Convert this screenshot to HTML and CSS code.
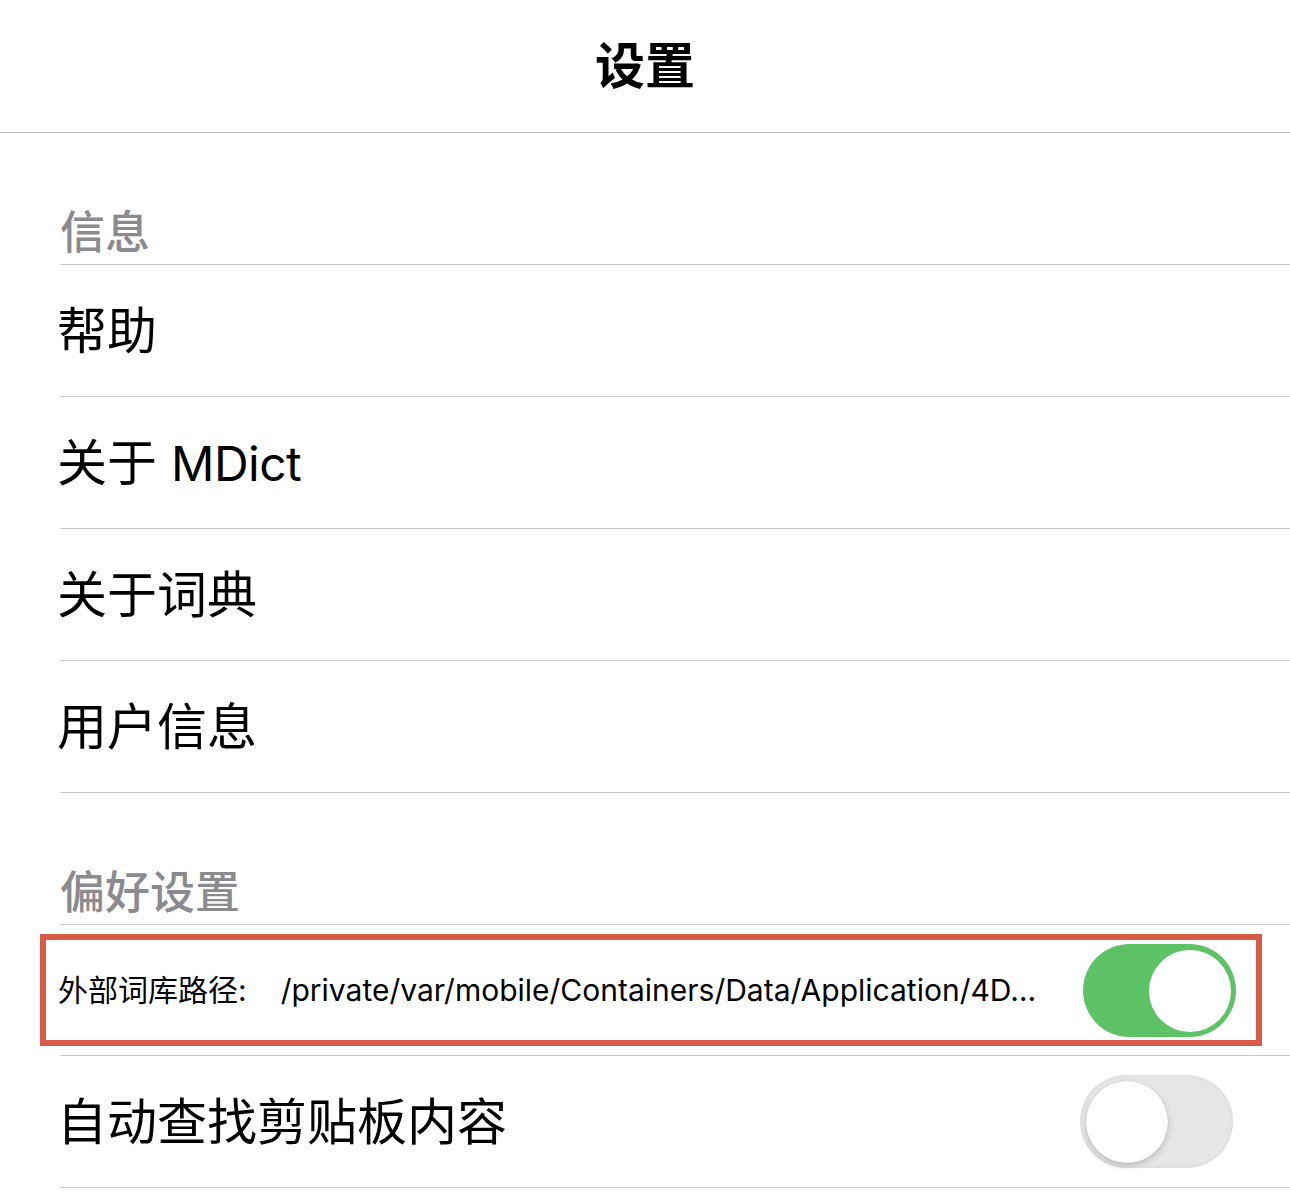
FILE: index.html
```html
<!DOCTYPE html>
<html lang="zh-CN">
<head>
<meta charset="utf-8">
<title>设置</title>
<link rel="stylesheet" href="styles.css">
</head>
<body>
<header class="nav">
  <h1 class="nav-title">设置</h1>
</header>
<main class="table">
  <section class="group">
    <div class="group-title">信息</div>
    <ul class="rows">
      <li class="row"><span class="row-label">帮助</span></li>
      <li class="row"><span class="row-label">关于 <span class="latin">MDict</span></span></li>
      <li class="row"><span class="row-label">关于词典</span></li>
      <li class="row"><span class="row-label">用户信息</span></li>
    </ul>
  </section>
  <section class="group">
    <div class="group-title">偏好设置</div>
    <ul class="rows">
      <li class="row row-path">
        <span class="path-label">外部词库路径:</span>
        <span class="path-value">/private/var/mobile/Containers/Data/Application/4D…</span>
        <span class="switch switch-on"><span class="knob"></span></span>
        <span class="highlight"></span>
      </li>
      <li class="row">
        <span class="row-label">自动查找剪贴板内容</span>
        <span class="switch switch-off"><span class="knob"></span></span>
      </li>
    </ul>
  </section>
</main>
</body>
</html>
```
FILE: styles.css
```css
* { box-sizing: border-box; }
html, body { margin: 0; padding: 0; background: #ffffff; }
body {
  font-family: "Inter", "Noto Sans CJK SC", sans-serif;
  color: #000;
  width: 1290px;
  height: 1192px;
  overflow: hidden;
}
.nav {
  height: 133px;
  border-bottom: 1px solid #b3b3b3;
  display: flex;
  align-items: center;
  justify-content: center;
}
.nav-title {
  margin: 0;
  font-size: 50px;
  font-weight: 700;
  line-height: 1;
}
.group-title {
  margin-left: 60px;
  height: 132px;
  border-bottom: 1px solid #c8c7cc;
  display: flex;
  align-items: flex-end;
  padding-bottom: 9px;
  font-size: 45px;
  font-weight: 500;
  line-height: 1;
  color: #8a8a8f;
}
.rows { list-style: none; margin: 0; padding: 0; }
.row {
  position: relative;
  margin-left: 60px;
  height: 132px;
  border-bottom: 1px solid #c8c7cc;
  display: flex;
  align-items: center;
  font-size: 50px;
  line-height: 1;
}
.row-label {
  flex: 1;
  margin-left: -3px;
}
.latin {
  font-size: 48px;
  letter-spacing: -0.5px;
}
.row-path {
  height: 131px;
  font-size: 30px;
}
.path-label { margin-left: -2px; }
.path-value {
  flex: 1;
  margin-left: 34px;
  white-space: nowrap;
}
.switch {
  position: relative;
  flex: none;
  width: 153px;
  height: 93px;
  border-radius: 47px;
}
.switch-on {
  background: #5ec366;
  margin-right: 54px;
}
.switch-off {
  background: #e6e6e6;
  box-shadow: inset 0 0 0 2px #e1e1e1;
  margin-right: 57px;
}
.knob {
  position: absolute;
  top: 6px;
  width: 82px;
  height: 82px;
  border-radius: 50%;
  background: #fff;
}
.switch-on .knob { right: 5px; }
.switch-off .knob {
  left: 6px;
  box-shadow: 0 3px 6px rgba(0,0,0,0.18), 0 0 1px rgba(0,0,0,0.2);
}
.highlight {
  position: absolute;
  left: -20px;
  right: 28px;
  top: 9px;
  bottom: 9px;
  border: 6px solid #da5a4a;
  pointer-events: none;
}
```
